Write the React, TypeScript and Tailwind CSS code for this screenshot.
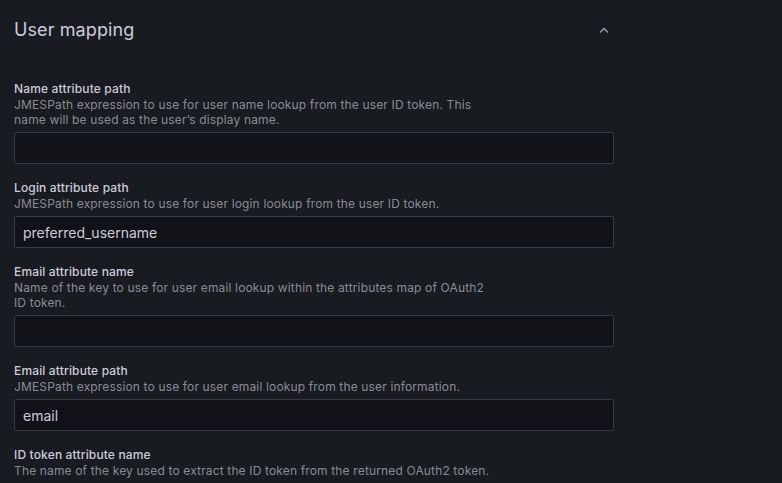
import React from "react";

const fields: { label: string; desc: string[]; value?: string; input: boolean }[] = [
  {
    label: "Name attribute path",
    desc: [
      "JMESPath expression to use for user name lookup from the user ID token. This",
      "name will be used as the user\u2019s display name.",
    ],
    value: "",
    input: true,
  },
  {
    label: "Login attribute path",
    desc: ["JMESPath expression to use for user login lookup from the user ID token."],
    value: "preferred_username",
    input: true,
  },
  {
    label: "Email attribute name",
    desc: [
      "Name of the key to use for user email lookup within the attributes map of OAuth2",
      "ID token.",
    ],
    value: "",
    input: true,
  },
  {
    label: "Email attribute path",
    desc: ["JMESPath expression to use for user email lookup from the user information."],
    value: "email",
    input: true,
  },
  {
    label: "ID token attribute name",
    desc: ["The name of the key used to extract the ID token from the returned OAuth2 token."],
    input: false,
  },
];

export default function App() {
  return (
    <div
      className="w-[782px] h-[483px] overflow-hidden bg-[#181b1f] text-[#ccccdc]"
      style={{ fontFamily: "Inter, 'Noto Sans', sans-serif" }}
    >
      <div className="w-[600px] ml-[14px]">
        <div className="flex items-center justify-between pt-[16px] h-[44px]">
          <h3 className="text-[18px] leading-[28px] font-normal text-[#ccccdc] tracking-[0.1px]">User mapping</h3>
          <svg width="16" height="16" viewBox="0 0 16 16" className="mr-[2px]">
            <polyline
              points="4.5,10 8,6.5 11.5,10"
              fill="none"
              stroke="#9da5b8"
              strokeWidth="1.4"
              strokeLinecap="round"
              strokeLinejoin="round"
            />
          </svg>
        </div>
        <div className="pt-[37px] flex flex-col">
          {fields.map((f) => (
            <div key={f.label} className="mb-[16px]">
              <div className="text-[12px] leading-[15px] font-medium text-[#ccccdc] tracking-[0.15px]">{f.label}</div>
              <div className="mt-[1px] text-[12px] leading-[15px] text-[#ccccdca6] tracking-[0.15px]">
                {f.desc.map((d) => (
                  <div key={d} className="whitespace-nowrap">
                    {d}
                  </div>
                ))}
              </div>
              {f.input && (
                <div className="mt-[5px] h-[32px] w-[600px] rounded-[2px] border border-[#36393f] bg-[#111217] flex items-center px-[8px] text-[14px] text-[#ccccdc]">
                  {f.value}
                </div>
              )}
            </div>
          ))}
        </div>
      </div>
    </div>
  );
}
